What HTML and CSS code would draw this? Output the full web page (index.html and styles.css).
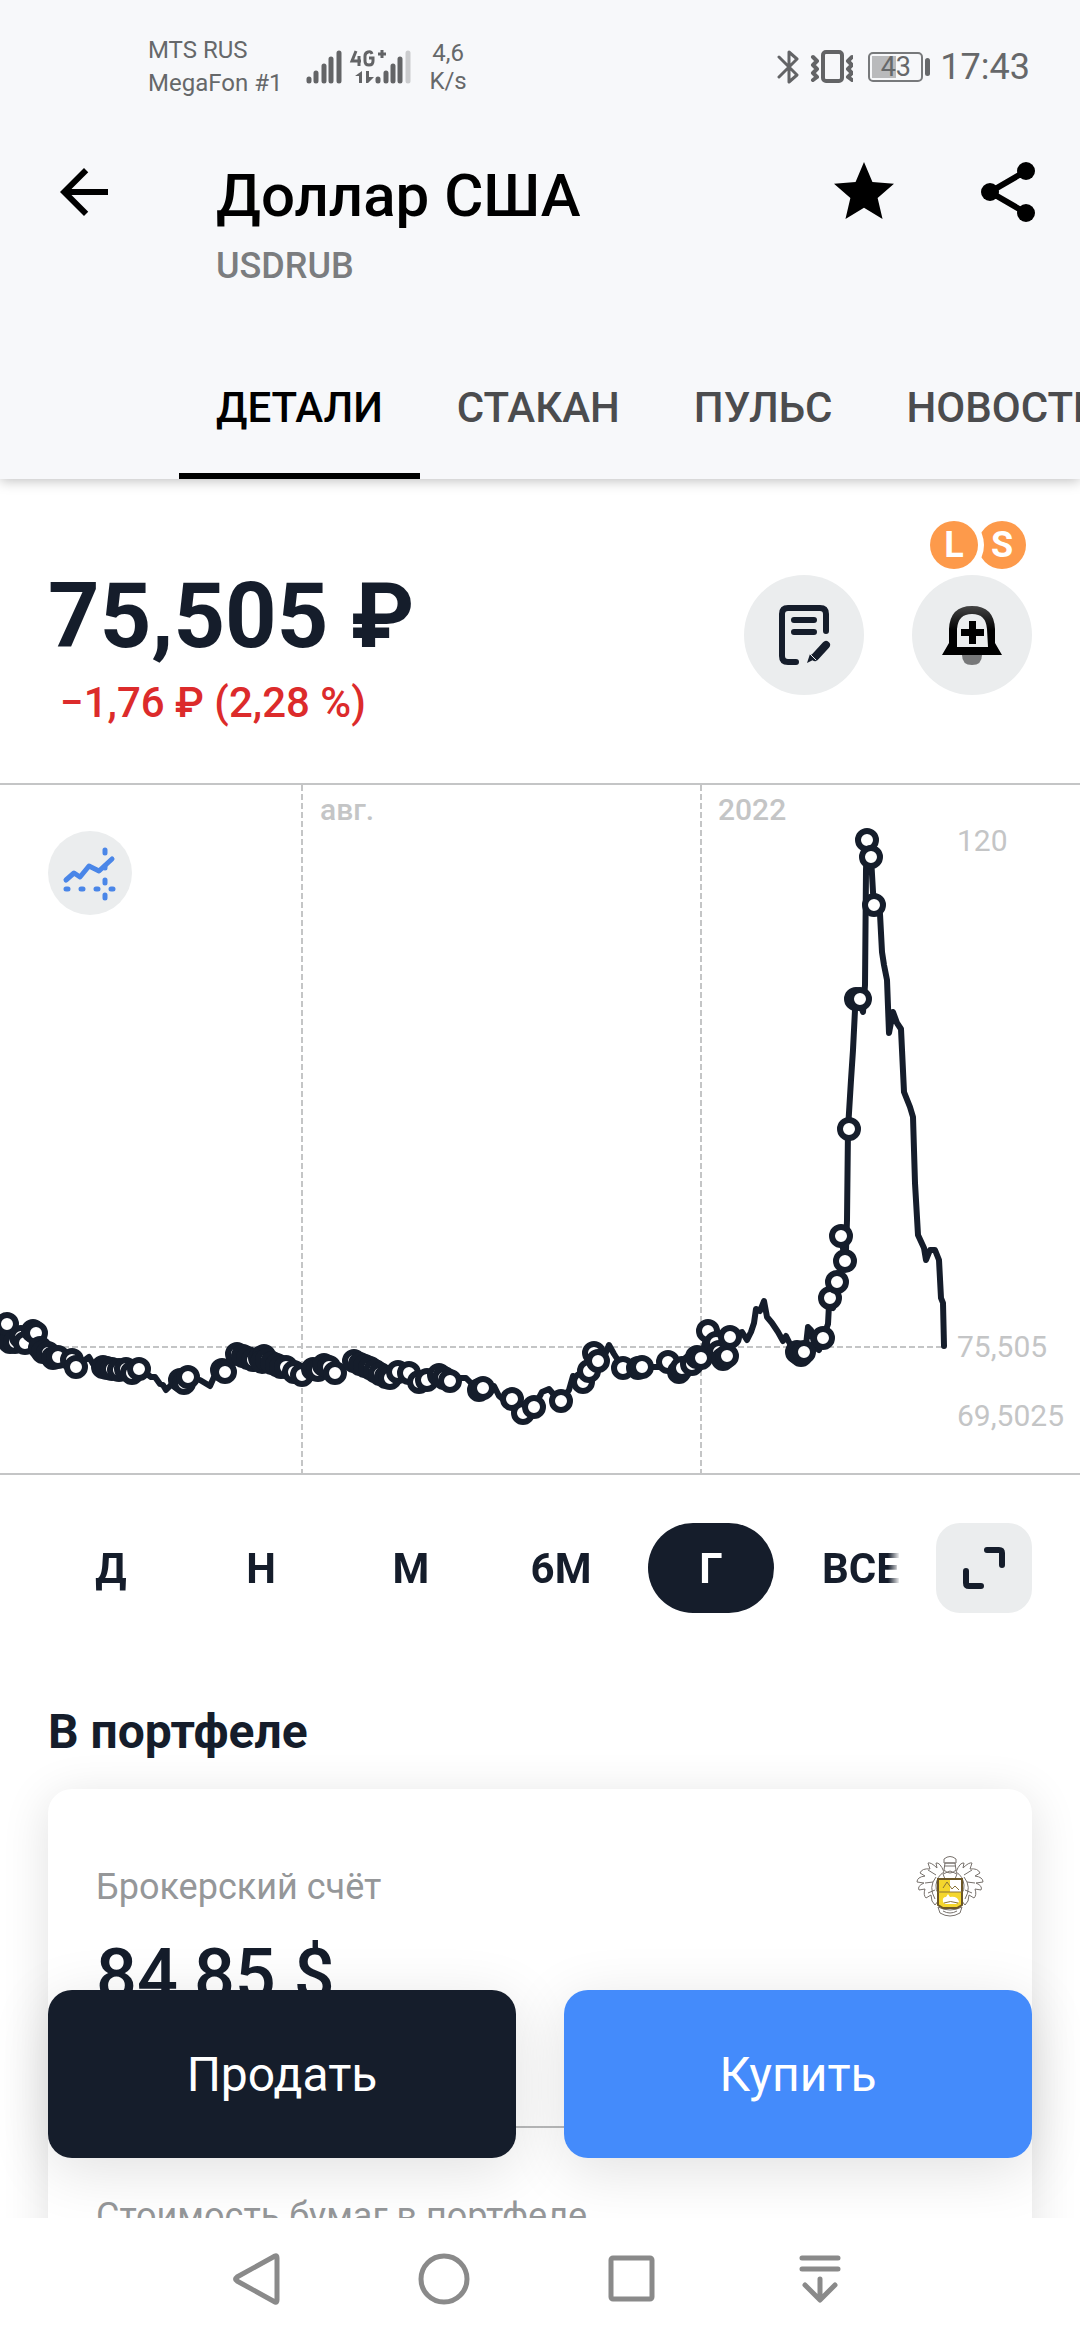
FILE: index.html
```html
<!DOCTYPE html>
<html lang="ru">
<head>
    <meta charset="UTF-8">
    <meta name="viewport" content="width=device-width, initial-scale=1.0">
    <title>Доллар США</title>
    <link rel="stylesheet" href="styles.css">
</head>
<body>
    <header class="header">
        <div class="status">
            <div class="operators">
                <div>MTS RUS</div>
                <div>MegaFon #1</div>
            </div>
            <svg class="signal" width="106" height="36" viewBox="0 0 106 36">
                <g stroke="#636466" stroke-width="5" stroke-linecap="round">
                    <path d="M3 30v2M10 24v8M18 17v15M25 10v22M33 4v28M72 30v2M80 24v8M87 17v15M94 10v22"/>
                    <path d="M102 4v28" stroke="#cbccce"/>
                </g>
                <g fill="none" stroke="#636466" stroke-width="3">
                    <path d="M50 2l-4 10h9M53 7v10M66 5q-1-3-4-2t-3 4v5q0 4 4 4t4-4v-3h-4M72 5h8M76 1v8"/>
                </g>
                <path d="M56 22v12h-3v-7h-4zM60 22h3v6h5l-6 6h-2z" fill="#636466"/>
            </svg>
            <div class="speed">
                <div>4,6</div>
                <div>K/s</div>
            </div>
            <div class="status-right">
                <svg width="76" height="36" viewBox="0 0 76 36">
                    <g fill="none" stroke="#636466" stroke-width="3" stroke-linejoin="round" stroke-linecap="round">
                        <path d="M2 8l18 18-8 7V3l8 7L2 28"/>
                        <path d="M36 8l4 4-4 4 4 4-4 4 4 4-4 3M75 8l-4 4 4 4-4 4 4 4-4 4 4 3" stroke-width="4"/>
                        <rect x="46" y="3" width="19" height="29" rx="3" stroke-width="4"/>
                    </g>
                </svg>
                <div class="battery"><span>43</span></div>
                <div class="clock">17:43</div>
            </div>
        </div>

        <div class="toolbar">
            <button class="tool back" aria-label="Назад">
                <svg width="72" height="72" viewBox="0 0 24 24"><path d="M20 11H7.83l5.59-5.59L12 4l-8 8 8 8 1.41-1.41L7.83 13H20v-2z"/></svg>
            </button>
            <div class="titles">
                <h1>Доллар США</h1>
                <p>USDRUB</p>
            </div>
            <button class="tool" aria-label="В избранное">
                <svg width="72" height="72" viewBox="0 0 24 24"><path d="M12 17.27L18.18 21l-1.64-7.03L22 9.24l-7.19-.61L12 2 9.19 8.63 2 9.24l5.46 4.73L5.82 21z"/></svg>
            </button>
            <button class="tool" aria-label="Поделиться">
                <svg width="72" height="72" viewBox="0 0 24 24">
                    <path d="M18 5L6 12l12 7" fill="none" stroke="#000" stroke-width="2"/>
                    <circle cx="18" cy="5" r="3"/><circle cx="6" cy="12" r="3"/><circle cx="18" cy="19" r="3"/>
                </svg>
            </button>
        </div>

        <nav class="tabs">
            <a href="#" class="active">ДЕТАЛИ</a>
            <a href="#">СТАКАН</a>
            <a href="#">ПУЛЬС</a>
            <a href="#">НОВОСТИ</a>
        </nav>
    </header>

    <main class="content">
        <section class="quote">
            <div class="price">
                <div class="price-value">75,505 ₽</div>
                <div class="price-change">−1,76 ₽ (2,28 %)</div>
            </div>
            <div class="quote-actions">
                <button class="round" aria-label="Заявка">
                    <svg width="60" height="60" viewBox="0 0 60 60" fill="none" stroke="#151d2b" stroke-width="6" stroke-linecap="round" stroke-linejoin="round">
                        <path d="M22 57H14q-6 0-6-6V9q0-6 6-6h32q6 0 6 6v17M20 15h20M20 27h20"/>
                        <path d="M52 40L41 52" stroke-width="8"/>
                        <path d="M37 49l4 5-8 4 3-9z" fill="#151d2b" stroke="none"/>
                        <path d="M36 49l6 6" stroke="#ebedee" stroke-width="1"/>
                    </svg>
                </button>
                <div class="alerts">
                    <div class="badges"><span class="badge badge-long">L</span><span class="badge">S</span></div>
                    <button class="round" aria-label="Уведомление о цене">
                        <svg width="60" height="60" viewBox="0 0 60 60">
                            <defs>
                                <linearGradient id="bell" x1="0" y1="0" x2="0" y2="1">
                                    <stop offset="0" stop-color="#444"/>
                                    <stop offset="0.5" stop-color="#000"/>
                                </linearGradient>
                            </defs>
                            <path d="M20 50h20q0 10-10 10t-10-10z" fill="#777879"/>
                            <path fill="url(#bell)" fill-rule="evenodd" d="M0 50l7-12V24Q8 1 30 1t23 23v14l7 12zM15 42h31l-1-18Q44 9 30 9T15 24z"/>
                            <path d="M27 16h7v8h8v7h-8v8h-7v-8h-8v-7h8z"/>
                        </svg>
                    </button>
                </div>
            </div>
        </section>

        <section class="chart">
            <svg viewBox="0 783 1080 692">
                <g stroke="#c4c5c6" stroke-width="2">
                    <path d="M0 784H1080M0 1474H1080"/>
                    <path d="M302 785V1473M701 785V1473M0 1347H944" stroke-dasharray="6 3"/>
                </g>
                <g class="chart-dates">
                    <text x="320" y="820">авг.</text>
                    <text x="718" y="820">2022</text>
                </g>
                <g class="chart-prices">
                    <text x="957" y="851">120</text>
                    <text x="957" y="1357">75,505</text>
                    <text x="957" y="1426">69,5025</text>
                </g>
                <polyline id="line" class="line"/>
                <g id="deals" class="deals"></g>
            </svg>
            <button class="indicator" aria-label="Индикаторы">
                <svg width="56" height="56" viewBox="0 0 56 56" fill="none" stroke="#4a86e8" stroke-width="5" stroke-linecap="round" stroke-linejoin="round">
                    <path d="M4 35l8-7 6 4 9-11 10 5 13-12"/>
                    <path d="M4 44h2M19 44h2M34 44h2M49 44h2M43 5v3M43 21v2M43 35v3M43 50v3"/>
                </svg>
            </button>
        </section>

        <section class="periods">
            <div class="period-list">
                <button>Д</button>
                <button>Н</button>
                <button>М</button>
                <button>6М</button>
                <button class="active">Г</button>
                <button>ВСЕ</button>
            </div>
            <button class="expand" aria-label="На весь экран">
                <svg width="42" height="42" viewBox="0 0 42 42" fill="none" stroke="#151d2b" stroke-width="6" stroke-linecap="round">
                    <path d="M24 3h12q3 0 3 3v12M3 24v12q0 3 3 3h12"/>
                </svg>
            </button>
        </section>

        <h2>В портфеле</h2>
        <section class="card">
            <div class="card-top">
                <span class="label">Брокерский счёт</span>
                <!-- Герб -->
                <svg class="crest" width="68" height="63" viewBox="0 0 68 63" fill="#fff" stroke="#77716c" stroke-width="1">
                    <path d="M28 17q-4-10-8-9l1 5q-6-6-9-5l2 6q-8-1-10 4l5 3q-8 1-8 6l7 1q-7 3-5 7l6-1q-2 6 1 9l5-3q0 7 4 10l4-5q2 6 7 6l1-7q-12-4-11-14 1-9 8-13z"/>
                    <path d="M40 17q4-10 8-9l-1 5q6-6 9-5l-2 6q8-1 10 4l-5 3q8 1 8 6l-7 1q7 3 5 7l-6-1q2 6-1 9l-5-3q0 7-4 10l-4-5q-2 6-7 6l-1-7q12-4 11-14-1-9-8-13z"/>
                    <path d="M20 22q-8 10-1 22M48 22q8 10 1 22M12 15l8 5M56 15l-8 5M9 28l8-1M59 28l-8-1M12 38l7-3M56 38l-7-3" fill="none"/>
                    <path d="M28 4q6-5 12 0v4H28zM29 8h10l1 7q-6 6-12 0zM28 11h12M27 19l7-3 7 3-2 5H29z"/>
                    <path d="M22 52q12 6 24 0l-2 6q-10 6-20 0zM27 56q7 4 14 0"/>
                    <path d="M22 24h24v26l-5 3H27l-5-3z" fill="#f4d62c" stroke="#6b5627" stroke-width="2"/>
                    <path d="M34 25h11v12H34zM27 47q-1-5 3-5l2-3 2 3q8-1 9 5l-3 2H29z" stroke="none"/>
                    <path d="M22 37h24M27 33l4-6 5 7 3-3 4 4M28 48q6-3 14 0" fill="none" stroke="#8a7338"/>
                </svg>
            </div>
            <div class="amount">84,85 $</div>
            <hr>
            <div class="label">Стоимость бумаг в портфеле</div>
        </section>

        <div class="actions">
            <button class="sell">Продать</button>
            <button class="buy">Купить</button>
        </div>
    </main>

    <footer class="navbar">
        <button aria-label="Назад"><svg width="52" height="52" viewBox="0 0 52 52"><path d="M45 3q2-1 2 2v42q0 3-2 2L7 28q-3-2 0-4z"/></svg></button>
        <button aria-label="Домой"><svg width="52" height="52" viewBox="0 0 52 52"><circle cx="26" cy="26" r="23"/></svg></button>
        <button aria-label="Недавние"><svg width="52" height="52" viewBox="0 0 52 52"><rect x="5" y="5" width="41" height="41" rx="2"/></svg></button>
        <button aria-label="Шторка"><svg width="52" height="52" viewBox="0 0 52 52"><path d="M8 5h36M8 16h36M26 26v20M11 32l15 15 15-15"/></svg></button>
    </footer>

    <script>
        // Линия цены
        var points = [
            [0, 1334], [7, 1324], [12, 1338], [25, 1343], [34, 1331], [42, 1350], [58, 1357], [76, 1367],
            [89, 1357], [93, 1364], [103, 1367], [120, 1369], [132, 1373], [140, 1369], [151, 1377], [155, 1377],
            [160, 1384], [163, 1385], [166, 1390], [172, 1384], [184, 1382], [190, 1377], [200, 1380], [210, 1386],
            [214, 1377], [225, 1371], [237, 1354], [253, 1360], [265, 1356], [281, 1366], [302, 1375],
            [324, 1365], [335, 1373], [354, 1361], [375, 1371], [390, 1378], [398, 1372], [409, 1373],
            [420, 1382], [439, 1375], [450, 1381], [458, 1378], [466, 1378], [473, 1385], [483, 1388],
            [494, 1386], [499, 1396], [505, 1401], [512, 1399], [523, 1413], [534, 1407], [542, 1392],
            [549, 1389], [555, 1396], [561, 1401], [569, 1390], [573, 1376], [583, 1382], [589, 1371],
            [594, 1353], [598, 1361], [604, 1357], [609, 1345], [614, 1354], [623, 1368], [642, 1367],
            [659, 1367], [668, 1362], [679, 1372], [694, 1364], [701, 1358], [708, 1331], [716, 1343],
            [723, 1359], [727, 1356], [730, 1337], [742, 1332], [747, 1340], [751, 1332], [754, 1323],
            [756, 1309], [760, 1311], [764, 1301], [767, 1317], [772, 1323], [778, 1332], [783, 1341],
            [786, 1336], [790, 1344], [800, 1354], [806, 1345], [808, 1327], [811, 1330], [815, 1347],
            [819, 1350], [823, 1338], [828, 1324], [829, 1305], [833, 1308], [830, 1298], [837, 1282],
            [845, 1261], [841, 1236], [846, 1250], [847, 1220], [848, 1129], [851, 1080], [853, 1050],
            [855, 1010], [858, 999], [863, 1012], [865, 985], [866, 870], [867, 840], [871, 857],
            [873, 892], [874, 905], [880, 914], [882, 952], [884, 965], [887, 980], [889, 1033], [893, 1012],
            [897, 1023], [901, 1029], [904, 1092], [910, 1107], [913, 1117], [915, 1183], [918, 1235],
            [924, 1248], [926, 1260], [930, 1250], [935, 1250], [939, 1260], [941, 1298], [943, 1303], [944, 1346]
        ];

        // Сделки на графике
        var deals = [
            [10, 1342], [7, 1324], [15, 1342], [21, 1337], [25, 1343], [33, 1331], [36, 1333], [40, 1348],
            [43, 1352], [48, 1353], [53, 1358], [58, 1357], [72, 1360], [76, 1367], [103, 1367], [107, 1368],
            [112, 1369], [119, 1370], [126, 1369], [132, 1373], [139, 1369], [180, 1380], [184, 1383],
            [188, 1377], [222, 1370], [225, 1372], [237, 1354], [243, 1356], [248, 1358], [253, 1360],
            [260, 1358], [264, 1356], [262, 1362], [267, 1360], [272, 1363], [277, 1365], [281, 1367],
            [286, 1367], [294, 1372], [302, 1375], [313, 1369], [318, 1370], [324, 1365], [329, 1367],
            [335, 1373], [354, 1361], [360, 1364], [365, 1366], [370, 1368], [375, 1371], [380, 1374],
            [386, 1377], [390, 1378], [398, 1372], [409, 1373], [419, 1382], [427, 1380], [439, 1375],
            [444, 1378], [450, 1381], [479, 1390], [483, 1388], [512, 1399], [523, 1413], [534, 1407],
            [561, 1401], [583, 1382], [589, 1371], [594, 1353], [598, 1361], [623, 1368], [638, 1368],
            [642, 1367], [668, 1362], [679, 1372], [682, 1368], [692, 1364], [697, 1357], [701, 1358],
            [708, 1331], [716, 1343], [719, 1352], [723, 1359], [727, 1356], [730, 1337], [797, 1352],
            [801, 1355], [804, 1352], [823, 1338], [830, 1298], [837, 1282], [845, 1261], [841, 1236],
            [849, 1129], [856, 999], [860, 999], [867, 840], [871, 857], [874, 905]
        ];

        document.getElementById("line").setAttribute("points", points.join(" "));

        deals.forEach(function(deal) {
            var circle = document.createElementNS("http://www.w3.org/2000/svg", "circle");
            circle.setAttribute("cx", deal[0]);
            circle.setAttribute("cy", deal[1]);
            circle.setAttribute("r", 9);
            document.getElementById("deals").appendChild(circle);
        });
    </script>
</body>
</html>
```
FILE: styles.css
```css
* {
    box-sizing: border-box;
}

body {
    margin: 0;
    height: 100vh;
    display: flex;
    flex-direction: column;
    background-color: #fff;
    color: #151d2b;
    font-family: Roboto, "Liberation Sans", sans-serif;
    overflow: hidden;
}

button {
    margin: 0;
    padding: 0;
    border: none;
    background: none;
    color: inherit;
    font-family: inherit;
    cursor: pointer;
}

svg {
    display: block;
}

h1, h2, p {
    margin: 0;
}

.header {
    position: relative;
    z-index: 2;
    flex: none;
    background-color: #f7f8fa;
    box-shadow: 0 2px 12px rgba(0, 0, 0, 0.25);
}

/* Статус-бар */
.status {
    display: flex;
    align-items: center;
    height: 108px;
    padding: 26px 50px 0 148px;
    color: #66686a;
    font-size: 24px;
}

.operators {
    line-height: 33px;
}

.signal {
    margin-left: 24px;
}

.speed {
    margin-left: 17px;
    line-height: 28px;
    text-align: center;
}

.status-right {
    display: flex;
    align-items: center;
    margin-left: auto;
}

.battery {
    position: relative;
    width: 55px;
    height: 30px;
    margin: 0 17px 0 15px;
    border: 2px solid #77797b;
    border-radius: 5px;
    background: linear-gradient(#b9babc, #b9babc) 2px 2px / 24px 22px no-repeat;
    line-height: 26px;
    text-align: center;
    font-size: 27px;
}

.battery::after {
    content: "";
    position: absolute;
    top: 4px;
    right: -9px;
    width: 5px;
    height: 18px;
    border-radius: 3px;
    background-color: #66686a;
}

.clock {
    font-size: 36px;
}

.toolbar {
    display: flex;
    align-items: flex-start;
    height: 227px;
}

.tool {
    display: flex;
    align-items: center;
    justify-content: center;
    width: 144px;
    height: 168px;
}

.back {
    width: 168px;
}

.titles {
    flex: 1;
    padding: 52px 0 0 48px;
}

.titles h1 {
    color: #000;
    font-size: 60px;
    font-weight: 500;
    line-height: 72px;
}

.titles p {
    color: #7b7d7f;
    font-size: 36px;
    font-weight: 500;
    line-height: 68px;
}

.tabs {
    display: flex;
    padding-left: 179px;
    overflow: hidden;
}

.tabs a {
    flex: none;
    height: 144px;
    padding: 0 37px;
    border-bottom: 6px solid transparent;
    color: #4b4c4e;
    font-size: 42px;
    font-weight: 500;
    line-height: 146px;
    text-decoration: none;
}

.tabs .active {
    border-color: #000;
    color: #000;
}

.content {
    position: relative;
    flex: 1;
    min-height: 0;
    overflow: hidden;
}

/* Цена */
.quote {
    display: flex;
    justify-content: space-between;
    height: 304px;
    padding: 42px 48px 0;
}

.price {
    padding-top: 42px;
}

.price-value {
    font-size: 90px;
    font-weight: 700;
    line-height: 108px;
}

.price-change {
    padding-left: 12px;
    color: #dc2b2b;
    font-size: 42px;
    font-weight: 500;
    line-height: 64px;
}

.quote-actions {
    display: flex;
    align-items: flex-end;
    align-self: flex-start;
    gap: 48px;
}

.round {
    display: flex;
    align-items: center;
    justify-content: center;
    width: 120px;
    height: 120px;
    border-radius: 50%;
    background-color: #ebedee;
}

.badges {
    display: flex;
    justify-content: center;
    margin: 0 6px 6px 18px;
}

.badge {
    width: 48px;
    height: 48px;
    border-radius: 50%;
    background-color: #fd9a4b;
    color: #fff;
    font-size: 36px;
    font-weight: 700;
    line-height: 48px;
    text-align: center;
}

.badge-long {
    position: relative;
    box-shadow: 0 0 0 6px #fff;
}

/* График */
.chart {
    position: relative;
}

.chart > svg {
    width: 100%;
    height: auto;
}

.chart-dates, .chart-prices {
    fill: #c4c5c6;
    font-size: 30px;
}

.chart-dates {
    font-weight: 500;
}

.line {
    fill: none;
    stroke: #151d2b;
    stroke-width: 6;
    stroke-linecap: round;
    stroke-linejoin: round;
}

.deals {
    fill: #fff;
    stroke: #151d2b;
    stroke-width: 6;
}

.indicator {
    position: absolute;
    top: 48px;
    left: 48px;
    display: flex;
    align-items: center;
    justify-content: center;
    width: 84px;
    height: 84px;
    border-radius: 50%;
    background-color: #ebedee;
}

/* Периоды */
.periods {
    display: flex;
    gap: 36px;
    padding: 48px 48px 0;
}

.period-list {
    display: flex;
    flex: 1;
    gap: 24px;
    overflow: hidden;
    -webkit-mask-image: linear-gradient(to left, transparent, #000 12px);
    mask-image: linear-gradient(to left, transparent, #000 12px);
}

.period-list button {
    flex: none;
    width: 126px;
    height: 90px;
    border-radius: 45px;
    font-size: 42px;
    font-weight: 700;
}

.period-list .active {
    background-color: #151d2b;
    color: #fff;
}

.expand {
    display: flex;
    align-items: center;
    justify-content: center;
    width: 96px;
    height: 90px;
    border-radius: 24px;
    background-color: #ebedee;
}

h2 {
    padding: 89px 48px 27px;
    font-size: 48px;
    font-weight: 700;
    line-height: 60px;
}

.card {
    margin: 0 48px;
    padding: 66px 48px 48px;
    border-radius: 24px;
    background-color: #fff;
    box-shadow: 0 8px 48px rgba(0, 0, 0, 0.12);
}

.card-top {
    display: flex;
    align-items: center;
    justify-content: space-between;
}

.label {
    color: #959799;
    font-size: 36px;
    line-height: 48px;
}

.amount {
    margin-top: 10px;
    font-size: 72px;
    font-weight: 500;
    line-height: 96px;
}

.card hr {
    height: 2px;
    margin: 102px 0 64px;
    border: none;
    background-color: #bbbcbd;
}

.actions {
    position: absolute;
    right: 48px;
    bottom: 60px;
    left: 48px;
    display: flex;
    gap: 48px;
}

.actions button {
    flex: 1;
    height: 168px;
    border-radius: 24px;
    box-shadow: 0 12px 60px rgba(0, 0, 0, 0.12);
    color: #fff;
    font-size: 48px;
}

.sell {
    background-color: #151d2b;
}

.buy {
    background-color: #448bfb;
}

.navbar {
    position: relative;
    display: flex;
    flex: none;
    justify-content: center;
    gap: 136px;
    height: 122px;
    padding-right: 4px;
    background-color: #fff;
}

.navbar svg {
    fill: none;
    stroke: #8a8a8a;
    stroke-width: 5;
    stroke-linecap: round;
    stroke-linejoin: round;
}
```
